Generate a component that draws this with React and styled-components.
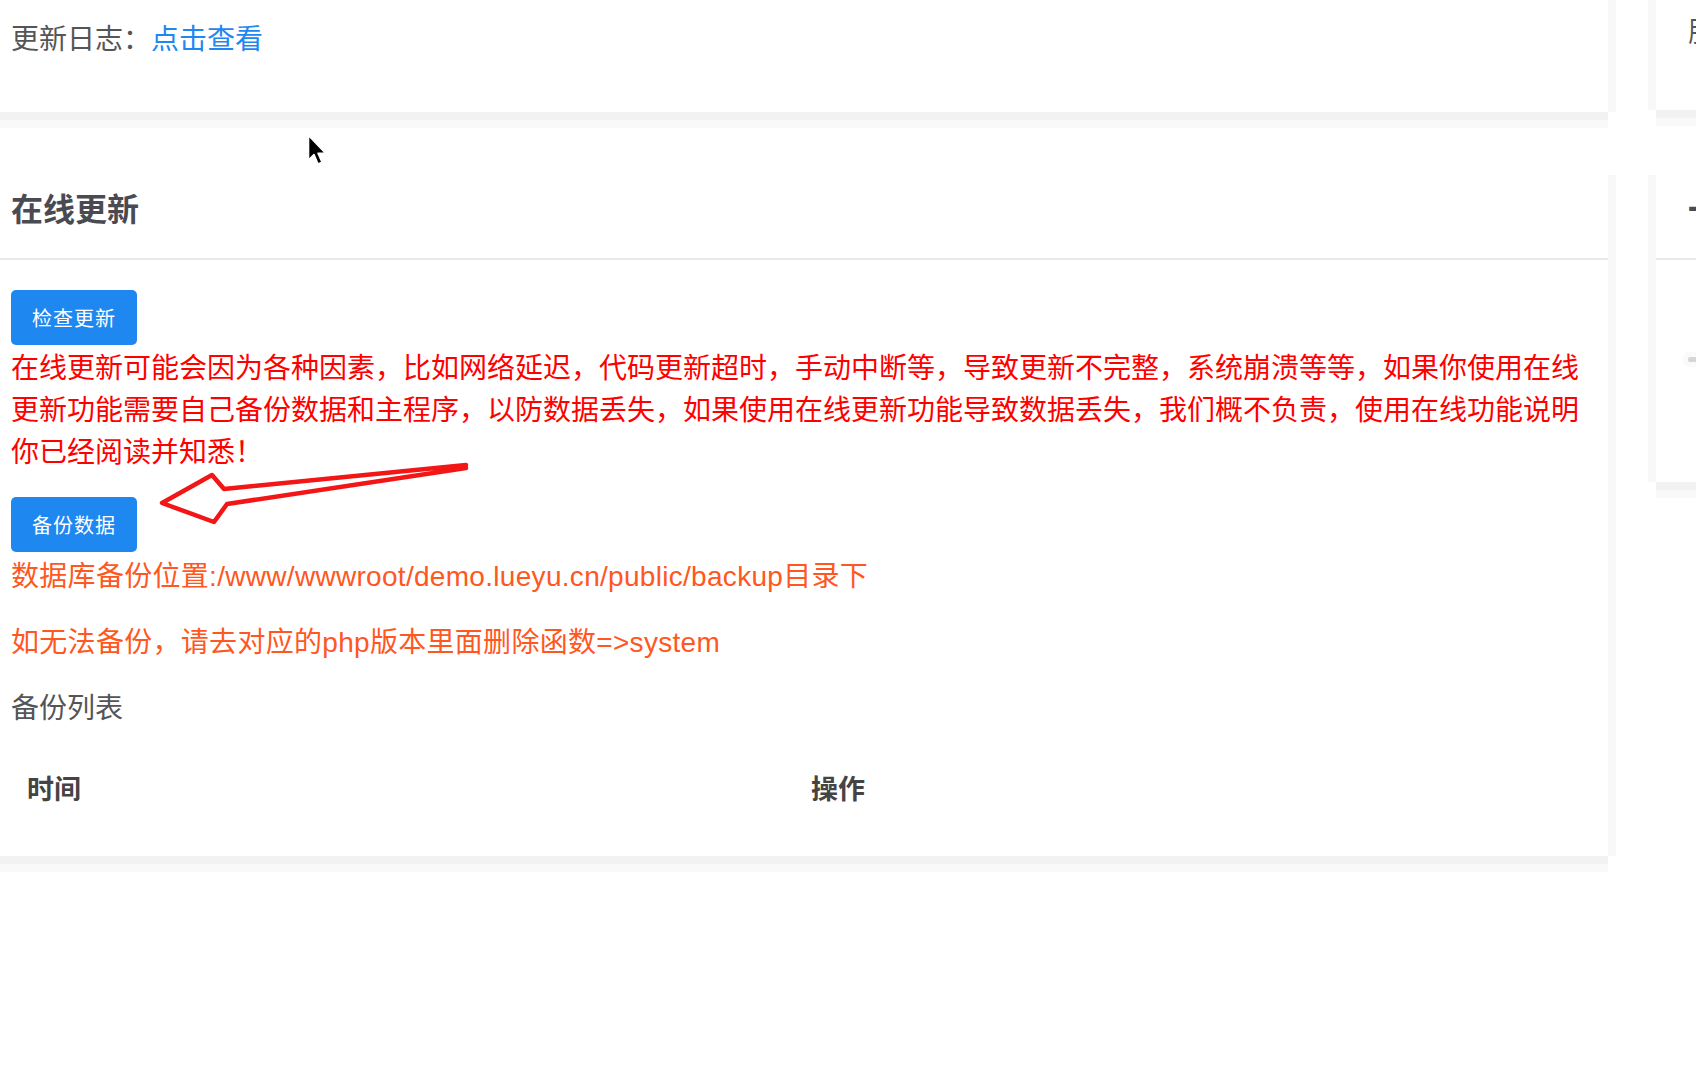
import React from 'react';
import styled, { createGlobalStyle } from 'styled-components';

const GlobalStyle = createGlobalStyle`
  html, body {
    margin: 0;
    padding: 0;
    background: #fff;
  }
  body {
    font-family: "Liberation Sans", "Noto Sans CJK SC", sans-serif;
  }
`;

const FONT = `"Liberation Sans", "Noto Sans CJK SC", sans-serif`;

const Page = styled.div`
  position: relative;
  width: 1696px;
  height: 1072px;
  overflow: hidden;
  display: flex;
  align-items: flex-start;
  gap: 48px;
  font-family: ${FONT};
`;

const MainColumn = styled.div`
  flex: 0 0 1608px;
  display: flex;
  flex-direction: column;
  gap: 63px;
`;

const SideColumn = styled.div`
  flex: 0 0 420px;
  display: flex;
  flex-direction: column;
  gap: 65px;
`;

const Card = styled.div`
  background: #fff;
  box-shadow: 0 8px 0 #f2f2f2, 0 16px 0 #f9f9f9, 8px 0 0 #f8f8f8,
    -8px 0 0 #f8f8f8;
`;

const Intro = styled.div`
  padding: ${(p) => (p.$side ? '13px 32px 57px' : '20px 11px 52px')};
  font-size: 28px;
  line-height: 40px;
  color: #555;
  white-space: nowrap;
`;

const Link = styled.a`
  color: #1e87f0;
  text-decoration: none;
  cursor: pointer;
`;

const CardHeader = styled.div`
  box-sizing: border-box;
  height: 85px;
  padding: 15px ${(p) => (p.$side ? '32px' : '11px')} 0;
  border-bottom: 2px solid #e8e8e8;
`;

const Title = styled.h3`
  margin: 0;
  font-size: 32px;
  line-height: 40px;
  font-weight: bold;
  color: #4a4a52;
  white-space: nowrap;
`;

const CardBody = styled.div`
  box-sizing: border-box;
  height: ${(p) => (p.$height ? `${p.$height}px` : 'auto')};
  padding: 30px ${(p) => (p.$side ? '32px' : '11px')} 30px;
`;

const Button = styled.button`
  display: block;
  box-sizing: border-box;
  width: 126px;
  height: 55px;
  margin: ${(p) => (p.$spaced ? '23px 0 0' : '0')};
  padding: 0;
  border: none;
  border-radius: 5px;
  background: #1e87f0;
  color: #fff;
  font-family: ${FONT};
  font-size: 20px;
  letter-spacing: 1px;
  cursor: pointer;
`;

const Warning = styled.div`
  margin-top: 3px;
  font-size: 28px;
  line-height: 42px;
  color: #f00;
`;

const Note = styled.p`
  margin: ${(p) => (p.$first ? '4px 0 24px' : '0 0 24px')};
  font-size: 28px;
  line-height: 42px;
  letter-spacing: ${(p) => (p.$color ? '0.3px' : '0')};
  color: ${(p) => p.$color || '#555'};
  white-space: nowrap;
`;

const Table = styled.div`
  display: grid;
  grid-template-columns: 784px 1fr;
`;

const HeadCell = styled.div`
  padding: 16px;
  font-size: 27px;
  line-height: 40px;
  font-weight: bold;
  color: #444;
`;

const SideBar = styled.div`
  margin-top: 67px;
  width: 80px;
  height: 5px;
  border-radius: 2px;
  background: #d6d6d6;
  box-shadow: 0 0 0 5px #fafafa;
`;

const Overlay = styled.svg`
  position: absolute;
  left: ${(p) => p.$x}px;
  top: ${(p) => p.$y}px;
  pointer-events: none;
  overflow: visible;
`;

const App = () => {
  return (
    <>
      <GlobalStyle />
      <Page>
        <MainColumn>
          <Card>
            <Intro>
              更新日志：<Link>点击查看</Link>
            </Intro>
          </Card>
          <Card>
            <CardHeader>
              <Title>在线更新</Title>
            </CardHeader>
            <CardBody>
              <Button>检查更新</Button>
              <Warning>
                在线更新可能会因为各种因素，比如网络延迟，代码更新超时，手动中断等，导致更新不完整，系统崩溃等等，如果你使用在线更新功能需要自己备份数据和主程序，以防数据丢失，如果使用在线更新功能导致数据丢失，我们概不负责，使用在线功能说明你已经阅读并知悉！
              </Warning>
              <Button $spaced>备份数据</Button>
              <Note $first $color="#ff5722">
                数据库备份位置:/www/wwwroot/demo.lueyu.cn/public/backup目录下
              </Note>
              <Note $color="#ff5722">如无法备份，请去对应的php版本里面删除函数=&gt;system</Note>
              <Note>备份列表</Note>
              <Table>
                <HeadCell>时间</HeadCell>
                <HeadCell>操作</HeadCell>
              </Table>
            </CardBody>
          </Card>
        </MainColumn>
        <SideColumn>
          <Card>
            <Intro $side>服务器信息</Intro>
          </Card>
          <Card>
            <CardHeader $side>
              <Title>一键操作</Title>
            </CardHeader>
            <CardBody $side $height={222}>
              <SideBar />
            </CardBody>
          </Card>
        </SideColumn>

        <Overlay $x={140} $y={440} width="340" height="100" viewBox="0 0 340 100">
          <path
            d="M326 25 L84 49 L72 35 L22 63 L74 82 L87 64 L326 28"
            fill="none"
            stroke="#f21616"
            strokeWidth="4.5"
            strokeLinejoin="round"
            strokeLinecap="round"
          />
        </Overlay>

        <Overlay $x={307} $y={134} width="22" height="34" viewBox="0 0 22 34">
          <path
            d="M1.5 1.5 L1.5 26 L7 20.5 L11 30 L15 28.3 L11 19.2 L18.5 19.2 Z"
            fill="#000"
            stroke="#fff"
            strokeWidth="1.6"
            strokeLinejoin="round"
          />
        </Overlay>
      </Page>
    </>
  );
};

export default App;
